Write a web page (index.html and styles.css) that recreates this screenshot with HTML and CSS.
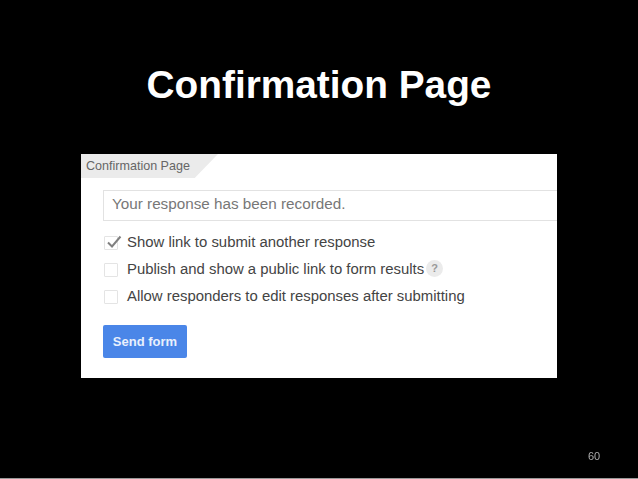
FILE: index.html
```html
<!DOCTYPE html>
<html lang="en">
<head>
  <meta charset="UTF-8" />
  <title>Confirmation Page</title>
  <link rel="stylesheet" href="styles.css">
</head>
<body>
  <div class="slide">
    <h1 class="slide-title">Confirmation Page</h1>

    <div class="panel">
      <div class="panel-tab">Confirmation Page</div>
      <div class="panel-body">
        <div class="response-box">Your response has been recorded.</div>

        <div class="option-list">
          <div class="option">
            <span class="checkbox">
              <svg class="check-mark" viewBox="0 0 16 16" width="16" height="16">
                <path d="M2 8.5 L6 12.5 L14.5 2.5" fill="none" stroke="#808080" stroke-width="2"/>
              </svg>
            </span>
            <span>Show link to submit another response</span>
          </div>
          <div class="option">
            <span class="checkbox"></span>
            <span>Publish and show a public link to form results</span>
            <span class="help-badge">?</span>
          </div>
          <div class="option">
            <span class="checkbox"></span>
            <span>Allow responders to edit responses after submitting</span>
          </div>
        </div>

        <button class="send-button">Send form</button>
      </div>
    </div>

    <div class="page-number">60</div>
  </div>
</body>
</html>
```

FILE: styles.css
```css
body {
  margin: 0;
  background-color: #000;
  font-family: "Liberation Sans", Arial, sans-serif;
}
.slide {
  height: 478px;
  border-bottom: 1px solid #999;
  display: flex;
  flex-direction: column;
  overflow: hidden;
}
.slide-title {
  margin: 0;
  padding-top: 64px;
  height: 154px;
  flex: none;
  box-sizing: border-box;
  font-size: 38.8px;
  line-height: 42px;
  font-weight: bold;
  color: #fff;
  text-align: center;
}
.panel {
  margin-left: 81px;
  width: 476px;
  height: 224px;
  flex: none;
  background-color: #fff;
  overflow: hidden;
}
.panel-tab {
  width: 137px;
  height: 24px;
  box-sizing: border-box;
  padding-left: 5px;
  background-color: #ebebeb;
  clip-path: polygon(0 0, 100% 0, 83% 100%, 0 100%);
  font-size: 12.55px;
  line-height: 24px;
  color: #666;
}
.panel-body {
  padding: 12px 0 0 22px;
}
.response-box {
  height: 31px;
  box-sizing: border-box;
  padding-left: 8px;
  border: 1px solid #e2e2e2;
  border-right: none;
  font-size: 15.25px;
  line-height: 26px;
  color: #777;
}
.option-list {
  margin-top: 7px;
  display: flex;
  flex-direction: column;
}
.option {
  height: 27px;
  display: flex;
  align-items: center;
  font-size: 14.9px;
  color: #444;
}
.checkbox {
  width: 14px;
  height: 14px;
  margin: 3px 9px 0 1px;
  box-sizing: border-box;
  border: 1px solid #e4e4e4;
  border-radius: 1px;
  position: relative;
  flex: none;
}
.check-mark {
  position: absolute;
  left: 1px;
  top: -3px;
}
.help-badge {
  width: 17px;
  height: 17px;
  margin-left: 2px;
  border-radius: 50%;
  background-color: #ebebeb;
  color: #999;
  font-size: 11px;
  font-weight: bold;
  line-height: 17px;
  text-align: center;
}
.send-button {
  display: block;
  margin-top: 16px;
  width: 84px;
  height: 33px;
  padding: 0;
  border: none;
  border-radius: 2px;
  background-color: #4a86e8;
  color: #e8f0fd;
  font-family: inherit;
  font-size: 13px;
  font-weight: bold;
}
.page-number {
  margin-top: 72px;
  margin-left: 588px;
  font-size: 11px;
  line-height: 13px;
  color: #aaa;
  filter: grayscale(1);
}
```
